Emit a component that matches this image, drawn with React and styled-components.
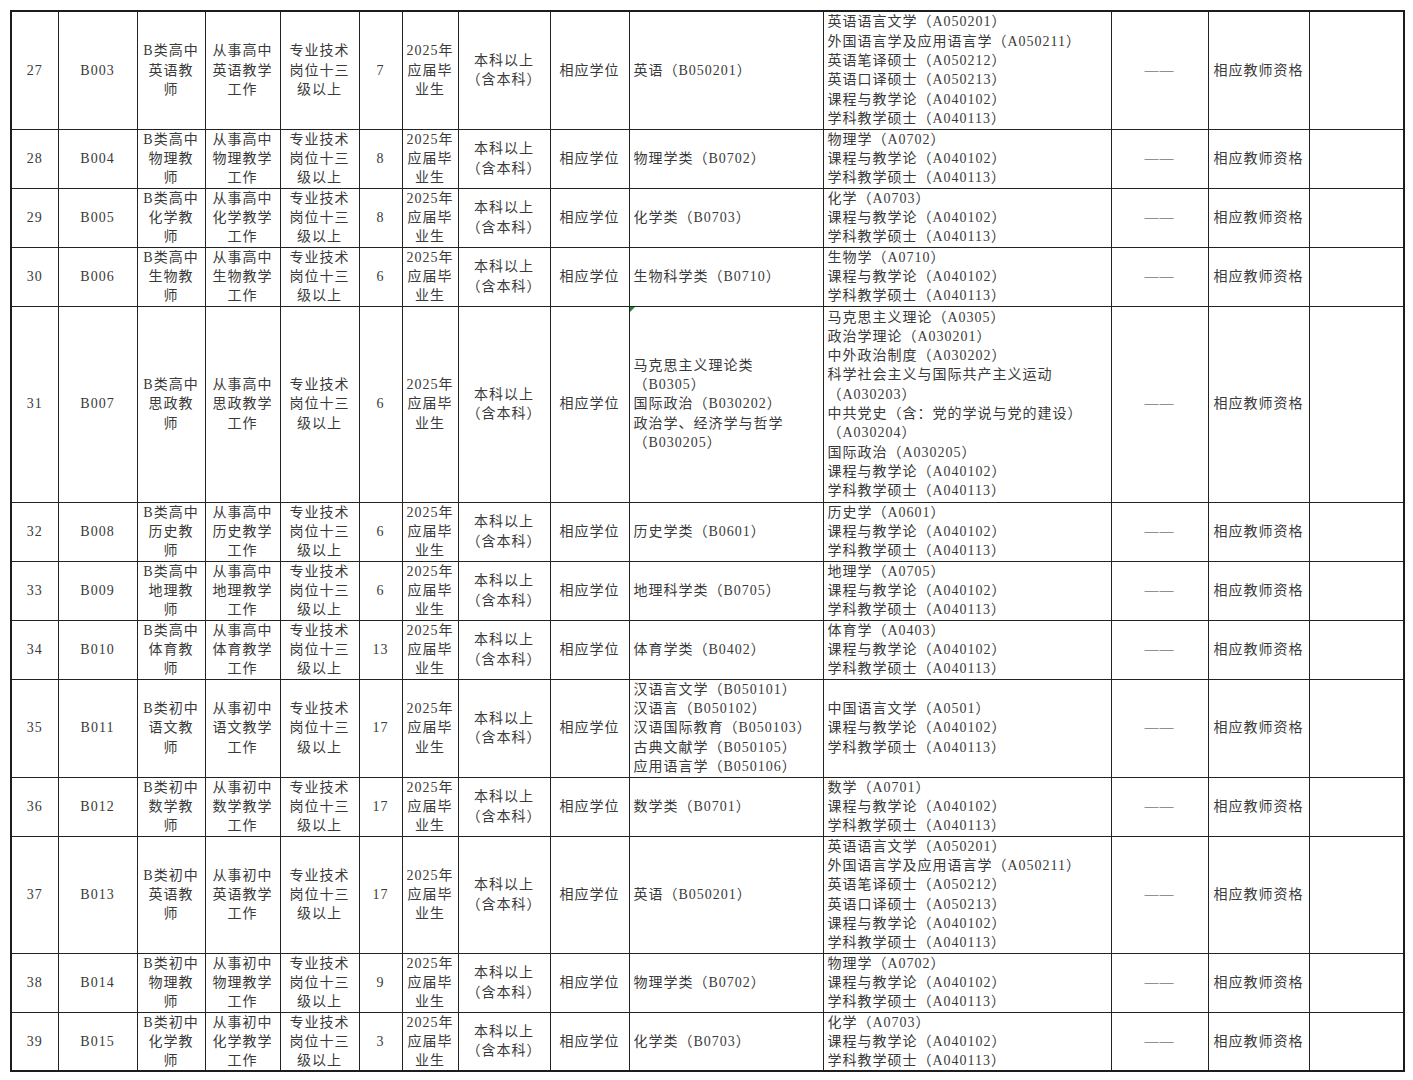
import React from 'react';
import styled, { createGlobalStyle } from 'styled-components';

const GlobalStyle = createGlobalStyle`
  html, body {
    margin: 0;
    padding: 0;
    background: #fff;
  }
  body {
    font-family: 'Liberation Serif', 'Noto Sans CJK SC', serif;
    color: #3a3a3a;
  }
`;

const Page = styled.div`
  padding: 10px 10px 10px 10px;
  width: 1393px;
`;

const Table = styled.table`
  width: 1393px;
  table-layout: fixed;
  border-collapse: collapse;
  border: 2px solid #1c1c1c;
  font-size: 14px;
  letter-spacing: 1px;
`;

const Row = styled.tr`
  height: ${(p) => p.$h}px;
`;

const Cell = styled.td`
  position: relative;
  border: 1px solid #222;
  padding: ${(p) => (p.$left ? '0 0 0 4px' : '0')};
  text-align: ${(p) => (p.$left ? 'left' : 'center')};
  vertical-align: middle;
  line-height: 19.3px;
  overflow: hidden;

  &.flag::before {
    content: '';
    position: absolute;
    left: 0;
    top: 0;
    border-top: 5px solid #1e8a2e;
    border-right: 5px solid transparent;
  }
`;

const Line = styled.div`
  white-space: nowrap;
`;

const widths = [47, 79, 68, 75, 79, 43, 56, 92, 79, 194, 288, 97, 101, 95];

const level = ['专业技术', '岗位十三', '级以上'];
const grad = ['2025年', '应届毕', '业生'];
const edu = ['本科以上', '（含本科）'];
const tail = ['课程与教学论（A040102）', '学科教学硕士（A040113）'];
const english = [
  '英语语言文学（A050201）',
  '外国语言学及应用语言学（A050211）',
  '英语笔译硕士（A050212）',
  '英语口译硕士（A050213）',
  ...tail,
];

const rows = [
  { no: 27, code: 'B003', stage: '高中', subj: '英语', n: 7, h: 118, major: ['英语（B050201）'], master: english },
  { no: 28, code: 'B004', stage: '高中', subj: '物理', n: 8, h: 59, major: ['物理学类（B0702）'], master: ['物理学（A0702）', ...tail] },
  { no: 29, code: 'B005', stage: '高中', subj: '化学', n: 8, h: 59, major: ['化学类（B0703）'], master: ['化学（A0703）', ...tail] },
  { no: 30, code: 'B006', stage: '高中', subj: '生物', n: 6, h: 59, major: ['生物科学类（B0710）'], master: ['生物学（A0710）', ...tail] },
  {
    no: 31, code: 'B007', stage: '高中', subj: '思政', n: 6, h: 196, flag: true,
    major: ['马克思主义理论类', '（B0305）', '国际政治（B030202）', '政治学、经济学与哲学', '（B030205）'],
    master: [
      '马克思主义理论（A0305）',
      '政治学理论（A030201）',
      '中外政治制度（A030202）',
      '科学社会主义与国际共产主义运动',
      '（A030203）',
      '中共党史（含：党的学说与党的建设）',
      '（A030204）',
      '国际政治（A030205）',
      ...tail,
    ],
  },
  { no: 32, code: 'B008', stage: '高中', subj: '历史', n: 6, h: 59, major: ['历史学类（B0601）'], master: ['历史学（A0601）', ...tail] },
  { no: 33, code: 'B009', stage: '高中', subj: '地理', n: 6, h: 59, major: ['地理科学类（B0705）'], master: ['地理学（A0705）', ...tail] },
  { no: 34, code: 'B010', stage: '高中', subj: '体育', n: 13, h: 59, major: ['体育学类（B0402）'], master: ['体育学（A0403）', ...tail] },
  {
    no: 35, code: 'B011', stage: '初中', subj: '语文', n: 17, h: 98,
    major: ['汉语言文学（B050101）', '汉语言（B050102）', '汉语国际教育（B050103）', '古典文献学（B050105）', '应用语言学（B050106）'],
    master: ['中国语言文学（A0501）', ...tail],
  },
  { no: 36, code: 'B012', stage: '初中', subj: '数学', n: 17, h: 59, major: ['数学类（B0701）'], master: ['数学（A0701）', ...tail] },
  { no: 37, code: 'B013', stage: '初中', subj: '英语', n: 17, h: 117, major: ['英语（B050201）'], master: english },
  { no: 38, code: 'B014', stage: '初中', subj: '物理', n: 9, h: 59, major: ['物理学类（B0702）'], master: ['物理学（A0702）', ...tail] },
  { no: 39, code: 'B015', stage: '初中', subj: '化学', n: 3, h: 59, major: ['化学类（B0703）'], master: ['化学（A0703）', ...tail] },
];

const Lines = ({ items }) => items.map((t, i) => <Line key={i}>{t}</Line>);

const JobRow = ({ r }) => (
  <Row $h={r.h}>
    <Cell>{r.no}</Cell>
    <Cell>{r.code}</Cell>
    <Cell><Lines items={[`B类${r.stage}`, `${r.subj}教`, '师']} /></Cell>
    <Cell><Lines items={[`从事${r.stage}`, `${r.subj}教学`, '工作']} /></Cell>
    <Cell><Lines items={level} /></Cell>
    <Cell>{r.n}</Cell>
    <Cell><Lines items={grad} /></Cell>
    <Cell><Lines items={edu} /></Cell>
    <Cell>相应学位</Cell>
    <Cell $left className={r.flag ? 'flag' : undefined}><Lines items={r.major} /></Cell>
    <Cell $left><Lines items={r.master} /></Cell>
    <Cell>——</Cell>
    <Cell>相应教师资格</Cell>
    <Cell />
  </Row>
);

export default function App() {
  return (
    <Page>
      <GlobalStyle />
      <Table>
        <colgroup>
          {widths.map((w, i) => <col key={i} style={{ width: w }} />)}
        </colgroup>
        <tbody>
          {rows.map((r) => <JobRow key={r.no} r={r} />)}
        </tbody>
      </Table>
    </Page>
  );
}
